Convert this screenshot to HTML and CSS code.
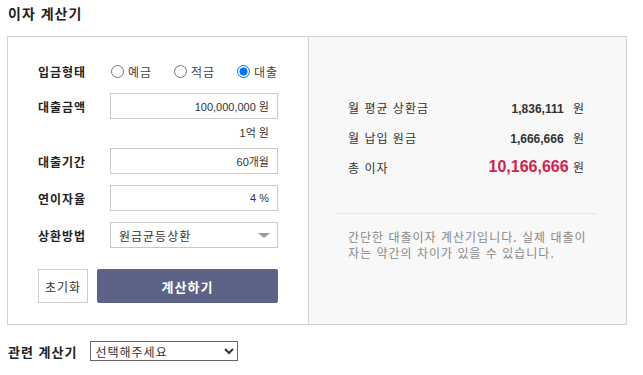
FILE: index.html
```html
<!DOCTYPE html>
<html lang="ko">
<head>
    <meta charset="UTF-8">
    <meta name="viewport" content="width=device-width, initial-scale=1.0">
    <title>이자 계산기</title>
    <link rel="stylesheet" href="styles.css">
</head>
<body>
    <h2 class="calc-title">이자 계산기</h2>

    <div class="calc-box">
        <div class="calc-form">
            <div class="field field-radio">
                <span class="field-label">입금형태</span>
                <label class="radio"><input type="radio" name="kind"> 예금</label>
                <label class="radio"><input type="radio" name="kind"> 적금</label>
                <label class="radio"><input type="radio" name="kind" checked> 대출</label>
            </div>

            <div class="field">
                <span class="field-label">대출금액</span>
                <input class="text-input" type="text" value="100,000,000 원">
            </div>
            <div class="field-sub">1억 원</div>

            <div class="field">
                <span class="field-label">대출기간</span>
                <input class="text-input" type="text" value="60개월">
            </div>

            <div class="field field-gap">
                <span class="field-label">연이자율</span>
                <input class="text-input" type="text" value="4 %">
            </div>

            <div class="field field-gap field-last">
                <span class="field-label">상환방법</span>
                <div class="select-wrap">
                    <select class="select-input">
                        <option>원금균등상환</option>
                        <option>원리금균등상환</option>
                        <option>만기일시상환</option>
                    </select>
                    <span class="select-arrow"></span>
                </div>
            </div>

            <div class="buttons">
                <button class="btn-reset" type="button">초기화</button>
                <button class="btn-calc" type="button">계산하기</button>
            </div>
        </div>

        <div class="calc-result">
            <div class="result-row">
                <span class="result-label">월 평균 상환금</span>
                <span class="result-value"><b>1,836,111</b> 원</span>
            </div>
            <div class="result-row">
                <span class="result-label">월 납입 원금</span>
                <span class="result-value"><b>1,666,666</b> 원</span>
            </div>
            <div class="result-row">
                <span class="result-label">총 이자</span>
                <span class="result-value"><b class="total">10,166,666</b> 원</span>
            </div>

            <p class="result-note">간단한 대출이자 계산기입니다. 실제 대출이자는 약간의 차이가 있을 수 있습니다.</p>
        </div>
    </div>

    <div class="related">
        <span class="related-label">관련 계산기</span>
        <select class="related-select">
            <option>선택해주세요</option>
            <option>적금 계산기</option>
            <option>예금 계산기</option>
        </select>
    </div>
</body>
</html>
```

FILE: styles.css
```css
* {
    margin: 0;
    padding: 0;
    box-sizing: border-box;
}

body {
    font-family: "Noto Sans CJK KR", "Liberation Sans", sans-serif;
    font-size: 12px;
    letter-spacing: 1px;
    color: #333;
    background: #fff;
    padding: 4px 0 0 7px;
}

.calc-title {
    font-size: 14px;
    line-height: 18px;
    font-weight: 700;
    color: #222;
    margin: 0 0 14px 1px;
}

.calc-box {
    width: 620px;
    display: flex;
    border: 1px solid #d2d2d2;
}

/* left: input form */
.calc-form {
    width: 301px;
    padding: 21px 30px 21px 30px;
    border-right: 1px solid #d2d2d2;
    background: #fff;
}

.field {
    display: flex;
    align-items: center;
    height: 26px;
}

.field-radio {
    margin-bottom: 9px;
}

.field-gap {
    margin-top: 11px;
}

.field-last {
    margin-bottom: 21px;
}

.field-label {
    flex: none;
    width: 72px;
    font-size: 12px;
    font-weight: 700;
    color: #222;
}

.radio {
    flex: none;
    display: flex;
    align-items: center;
    width: 63px;
    font-size: 12px;
    color: #444;
}

.radio:last-child {
    width: auto;
}

.radio input {
    width: 13px;
    height: 13px;
    margin: 0 4px 0 1px;
}

.text-input {
    width: 168px;
    height: 26px;
    border: 1px solid #c9c9c9;
    padding: 0 8px;
    text-align: right;
    font-family: "Liberation Sans", "Noto Sans CJK KR", sans-serif;
    font-size: 11px;
    letter-spacing: 0;
    color: #333;
    outline: none;
}

.field-sub {
    height: 29px;
    line-height: 29px;
    text-align: right;
    padding-right: 9px;
    font-family: "Liberation Sans", "Noto Sans CJK KR", sans-serif;
    font-size: 11px;
    letter-spacing: 0;
    color: #333;
}

.select-wrap {
    position: relative;
    width: 168px;
    height: 26px;
}

.select-input {
    appearance: none;
    -webkit-appearance: none;
    width: 100%;
    height: 26px;
    border: 1px solid #c9c9c9;
    border-radius: 0;
    background: #fff;
    padding: 0 8px;
    font-family: "Noto Sans CJK KR", sans-serif;
    font-size: 12px;
    letter-spacing: 1px;
    color: #333;
    outline: none;
}

.select-arrow {
    position: absolute;
    right: 8px;
    top: 11px;
    border-left: 6px solid transparent;
    border-right: 6px solid transparent;
    border-top: 5px solid #999;
    pointer-events: none;
}

.buttons {
    display: flex;
    gap: 9px;
    height: 34px;
}

.btn-reset {
    width: 50px;
    border: 1px solid #cfcfcf;
    background: #fff;
    font-family: "Noto Sans CJK KR", sans-serif;
    font-size: 12px;
    letter-spacing: 1px;
    color: #333;
    cursor: pointer;
}

.btn-calc {
    flex: 1;
    border: none;
    border-radius: 2px;
    background: #5d6386;
    color: #fff;
    font-family: "Noto Sans CJK KR", sans-serif;
    font-size: 13px;
    font-weight: 700;
    letter-spacing: 1px;
    cursor: pointer;
}

/* right: results */
.calc-result {
    flex: 1;
    background: #f8f8f8;
    padding: 55px 30px 0 28px;
}

.result-row {
    display: flex;
    justify-content: space-between;
    align-items: center;
    height: 30px;
    padding: 0 11px;
}

.result-label {
    font-size: 12px;
    color: #333;
}

.result-value {
    font-size: 12px;
    color: #333;
}

.result-value b {
    font-family: "Liberation Sans", sans-serif;
    font-size: 12px;
    font-weight: 700;
    letter-spacing: 0;
    margin-right: 5px;
    color: #333;
}

.result-value b.total {
    font-size: 16px;
    margin-right: 0;
    color: #d52249;
}

.result-note {
    margin-top: 31px;
    border-top: 1px solid #e6e6e6;
    padding: 15px 6px 0 11px;
    font-size: 12px;
    line-height: 16px;
    word-break: break-all;
    color: #888;
}

/* related calculators */
.related {
    display: flex;
    align-items: center;
    gap: 13px;
    margin: 16px 0 0 1px;
}

.related-label {
    font-size: 13px;
    font-weight: 700;
    color: #222;
}

.related-select {
    width: 148px;
    height: 20px;
    border: 1px solid #666;
    border-radius: 0;
    font-family: "Noto Sans CJK KR", sans-serif;
    font-size: 12px;
    letter-spacing: 1px;
    color: #333;
    background: #fff;
}
```
